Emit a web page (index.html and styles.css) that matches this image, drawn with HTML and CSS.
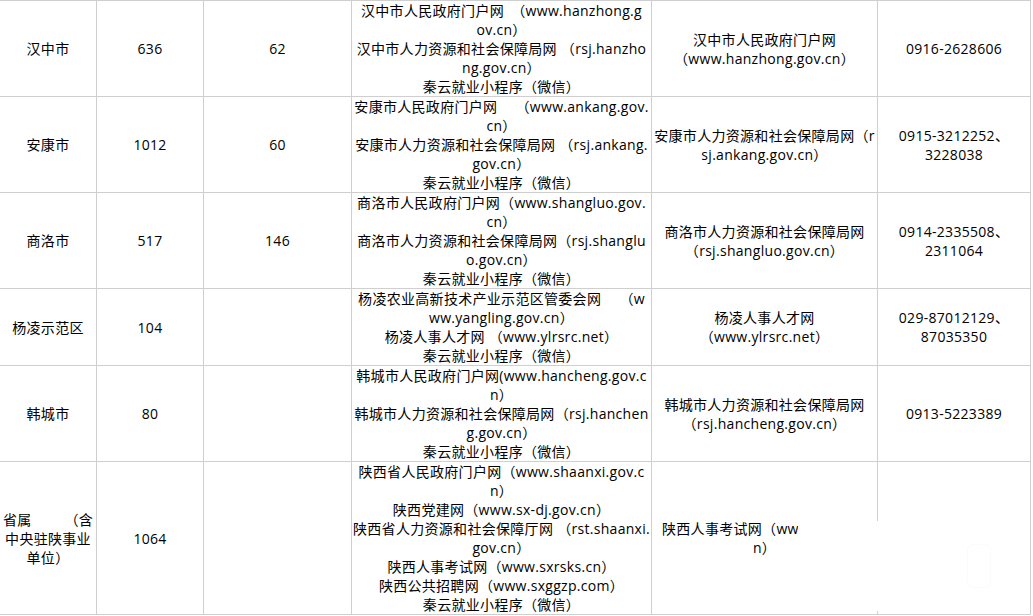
FILE: index.html
```html
<!DOCTYPE html>
<html lang="zh-CN">
<head>
<meta charset="utf-8">
<title>招聘信息发布渠道</title>
<link rel="stylesheet" href="styles.css">
</head>
<body>
<div class="page">
  <table class="grid">
    <colgroup>
      <col class="c-area"><col class="c-num"><col class="c-num2"><col class="c-sites"><col class="c-contact"><col class="c-phone">
    </colgroup>
    <tbody>
      <tr>
        <td class="area">汉中市</td>
        <td>636</td>
        <td>62</td>
        <td>汉中市人民政府门户网　（www.hanzhong.g<br>ov.cn）<br>汉中市人力资源和社会保障局网 （rsj.hanzho<br>ng.gov.cn）<br>秦云就业小程序（微信）</td>
        <td>汉中市人民政府门户网<br>（www.hanzhong.gov.cn）</td>
        <td>0916-2628606</td>
      </tr>
      <tr>
        <td class="area">安康市</td>
        <td>1012</td>
        <td>60</td>
        <td>安康市人民政府门户网　 （www.ankang.gov.<br>cn）<br>安康市人力资源和社会保障局网 （rsj.ankang.<br>gov.cn）<br>秦云就业小程序（微信）</td>
        <td>安康市人力资源和社会保障局网（r<br>sj.ankang.gov.cn）</td>
        <td>0915-3212252、<br>3228038</td>
      </tr>
      <tr>
        <td class="area">商洛市</td>
        <td>517</td>
        <td>146</td>
        <td>商洛市人民政府门户网（www.shangluo.gov.<br>cn）<br>商洛市人力资源和社会保障局网（rsj.shanglu<br>o.gov.cn）<br>秦云就业小程序（微信）</td>
        <td>商洛市人力资源和社会保障局网<br>（rsj.shangluo.gov.cn）</td>
        <td>0914-2335508、<br>2311064</td>
      </tr>
      <tr>
        <td class="area">杨凌示范区</td>
        <td>104</td>
        <td></td>
        <td>杨凌农业高新技术产业示范区管委会网　 （w<br>ww.yangling.gov.cn）<br>杨凌人事人才网 （www.ylrsrc.net）<br>秦云就业小程序（微信）</td>
        <td>杨凌人事人才网<br>（www.ylrsrc.net）</td>
        <td>029-87012129、<br>87035350</td>
      </tr>
      <tr>
        <td class="area">韩城市</td>
        <td>80</td>
        <td></td>
        <td>韩城市人民政府门户网(www.hancheng.gov.c<br>n）<br>韩城市人力资源和社会保障局网（rsj.hanchen<br>g.gov.cn）<br>秦云就业小程序（微信）</td>
        <td>韩城市人力资源和社会保障局网<br>（rsj.hancheng.gov.cn）</td>
        <td>0913-5223389</td>
      </tr>
      <tr>
        <td class="area"><span class="spread"><span>省属</span><span>（含</span></span>中央驻陕事业<br>单位）</td>
        <td>1064</td>
        <td></td>
        <td>陕西省人民政府门户网（www.shaanxi.gov.c<br>n）<br>陕西党建网（www.sx-dj.gov.cn）<br>陕西省人力资源和社会保障厅网 （rst.shaanxi.<br>gov.cn）<br>陕西人事考试网（www.sxrsks.cn）<br>陕西公共招聘网（www.sxggzp.com）<br>秦云就业小程序（微信）</td>
        <td>陕西人事考试网（www.sxrsks.c<br>n）</td>
        <td></td>
      </tr>
    </tbody>
  </table>
  <div class="veil"><div class="veil-handle"></div></div>
</div>
</body>
</html>
```

FILE: styles.css
```css
html, body {
  margin: 0;
  padding: 0;
  background: #fff;
}

body {
  font-family: "Open Sans", "Noto Sans CJK SC", sans-serif;
  font-size: 14px;
  line-height: 19px;
  letter-spacing: 0.3px;
  color: #000;
}

.page {
  position: relative;
  width: 1033px;
  height: 616px;
  overflow: hidden;
}

.grid {
  border-collapse: separate;
  border-spacing: 0;
  table-layout: fixed;
  width: 1031px;
  border-top: 1px solid #cfcfcf;
}

.c-area { width: 97px; }
.c-num { width: 107px; }
.c-num2 { width: 148px; }
.c-sites { width: 300px; }
.c-contact { width: 226px; }
.c-phone { width: 153px; }

.grid td {
  border-right: 1px solid #cfcfcf;
  border-bottom: 1px solid #cfcfcf;
  padding: 0 1px;
  text-align: center;
  vertical-align: middle;
  white-space: nowrap;
}

.grid td.area {
  padding: 0 3px;
}

.spread {
  display: flex;
  justify-content: space-between;
}

.veil {
  position: absolute;
  left: 798px;
  top: 521px;
  width: 231px;
  height: 90px;
  background: #fff;
}

.veil-handle {
  position: absolute;
  left: 169px;
  top: 23px;
  width: 22px;
  height: 42px;
  border: 1px solid #fbfbfb;
  border-radius: 6px;
}
```
